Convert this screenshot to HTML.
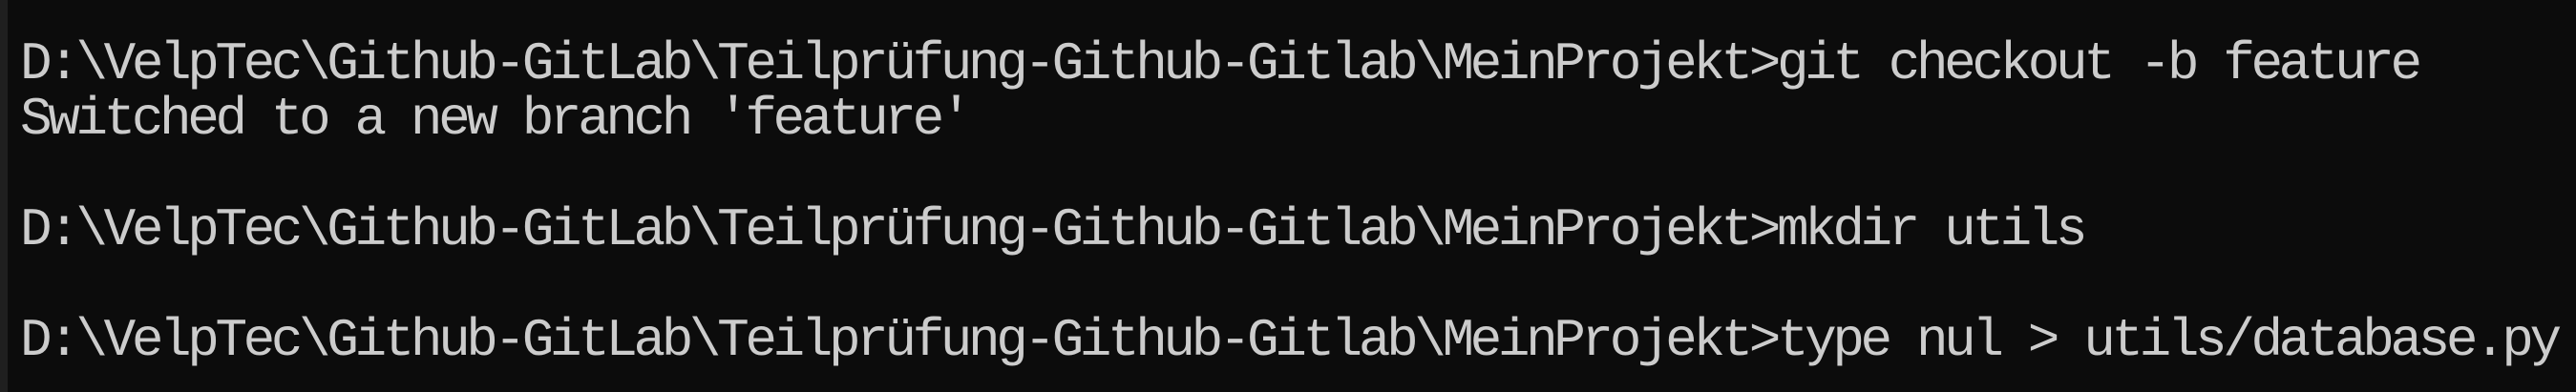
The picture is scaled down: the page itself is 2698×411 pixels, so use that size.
<!DOCTYPE html>
<html><head><meta charset="utf-8"><style>
html,body{margin:0;padding:0;width:2698px;height:411px;overflow:hidden;background:#0c0c0c;}
.bar{position:absolute;left:0;top:0;width:8px;height:411px;background:#1f1f1f;}
pre{position:absolute;left:21px;top:38px;margin:0;font-family:"Liberation Mono",monospace;font-size:56px;letter-spacing:-4.4px;line-height:58px;color:#cccccc;white-space:pre;}
</style></head><body>
<div class="bar"></div>
<pre>D:\VelpTec\Github-GitLab\Teilprüfung-Github-Gitlab\MeinProjekt&gt;git checkout -b feature
Switched to a new branch 'feature'

D:\VelpTec\Github-GitLab\Teilprüfung-Github-Gitlab\MeinProjekt&gt;mkdir utils

D:\VelpTec\Github-GitLab\Teilprüfung-Github-Gitlab\MeinProjekt&gt;type nul &gt; utils/database.py</pre>
</body></html>
